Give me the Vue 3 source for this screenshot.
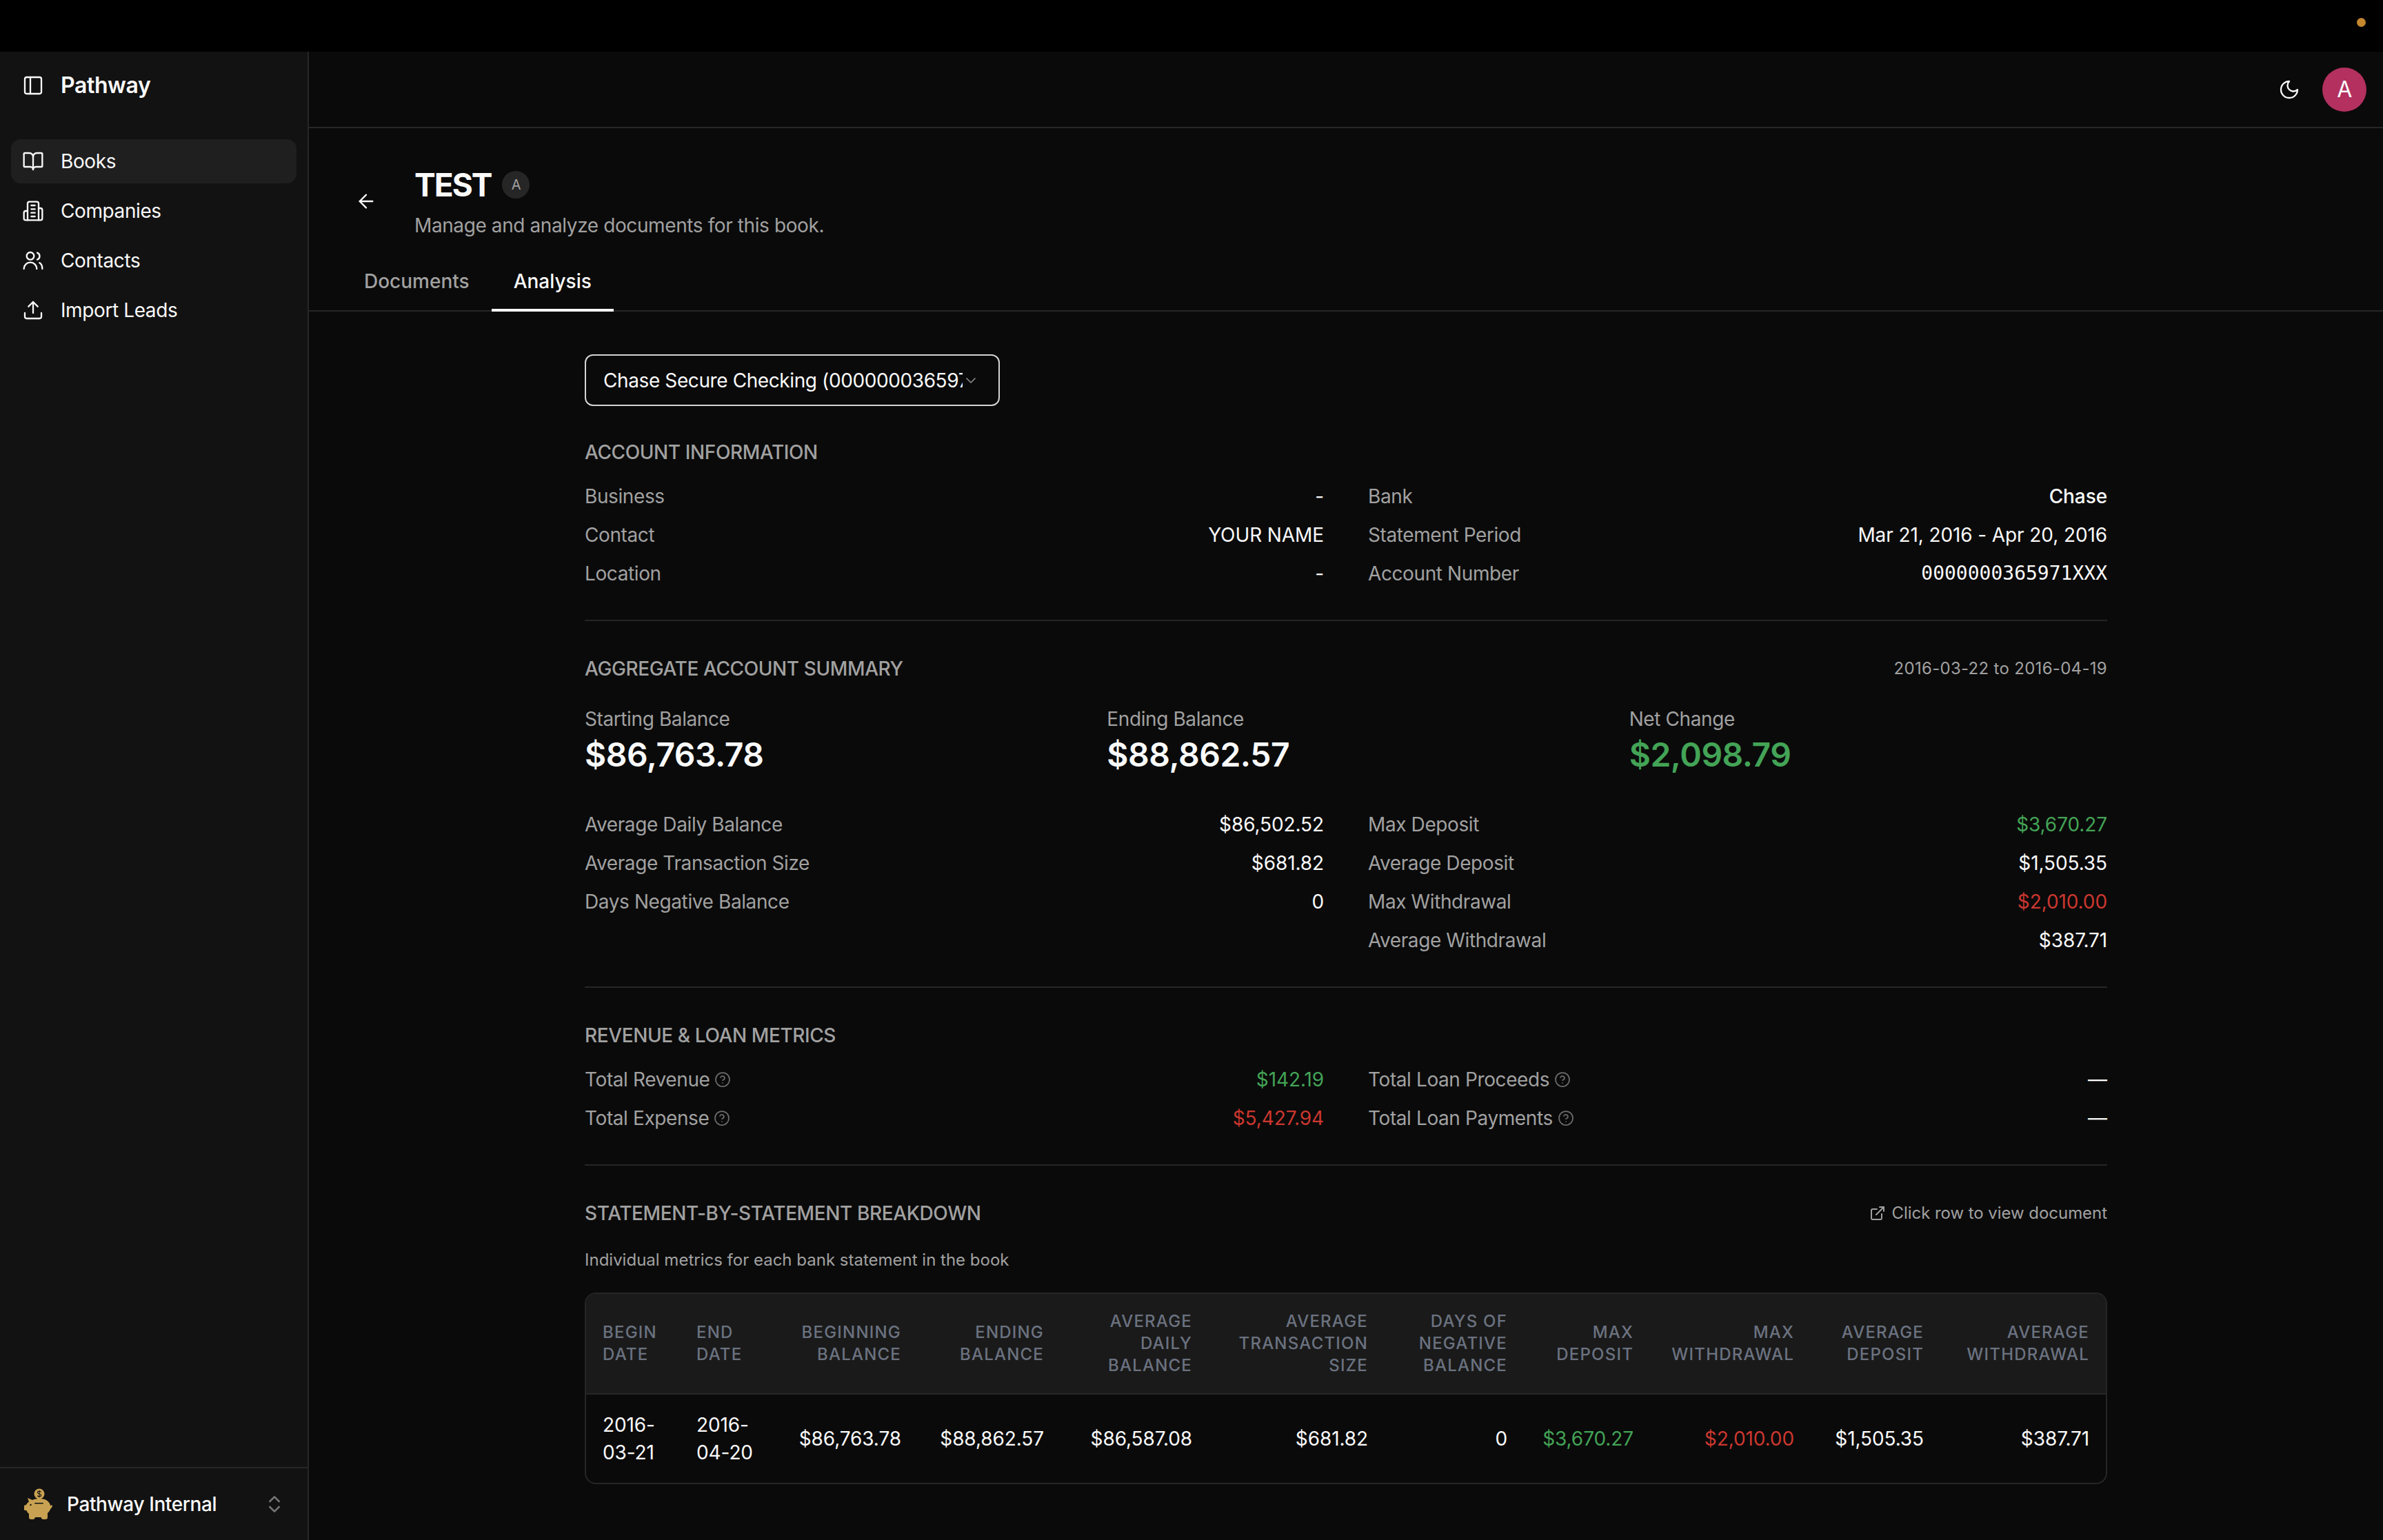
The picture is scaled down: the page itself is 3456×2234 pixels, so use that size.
<script setup>
const nav = [
  { label: 'Books', active: true, icon: 'book' },
  { label: 'Companies', icon: 'building' },
  { label: 'Contacts', icon: 'users' },
  { label: 'Import Leads', icon: 'upload' },
]

const accountLeft = [
  { label: 'Business', value: '-' },
  { label: 'Contact', value: 'YOUR NAME' },
  { label: 'Location', value: '-' },
]
const accountRight = [
  { label: 'Bank', value: 'Chase', strong: true },
  { label: 'Statement Period', value: 'Mar 21, 2016 - Apr 20, 2016' },
  { label: 'Account Number', value: '0000000365971XXX', mono: true },
]

const totals = [
  { label: 'Starting Balance', value: '$86,763.78' },
  { label: 'Ending Balance', value: '$88,862.57' },
  { label: 'Net Change', value: '$2,098.79', tone: 'green' },
]

const summaryLeft = [
  { label: 'Average Daily Balance', value: '$86,502.52' },
  { label: 'Average Transaction Size', value: '$681.82' },
  { label: 'Days Negative Balance', value: '0' },
]
const summaryRight = [
  { label: 'Max Deposit', value: '$3,670.27', tone: 'green' },
  { label: 'Average Deposit', value: '$1,505.35' },
  { label: 'Max Withdrawal', value: '$2,010.00', tone: 'red' },
  { label: 'Average Withdrawal', value: '$387.71' },
]

const revenueLeft = [
  { label: 'Total Revenue', value: '$142.19', tone: 'green', help: true },
  { label: 'Total Expense', value: '$5,427.94', tone: 'red', help: true },
]
const revenueRight = [
  { label: 'Total Loan Proceeds', value: '—', help: true },
  { label: 'Total Loan Payments', value: '—', help: true },
]

const columns = [
  { head: ['BEGIN', 'DATE'], width: 136, left: true },
  { head: ['END', 'DATE'], width: 132, left: true },
  { head: ['BEGINNING', 'BALANCE'], width: 213 },
  { head: ['ENDING', 'BALANCE'], width: 207 },
  { head: ['AVERAGE', 'DAILY', 'BALANCE'], width: 215 },
  { head: ['AVERAGE', 'TRANSACTION', 'SIZE'], width: 255 },
  { head: ['DAYS OF', 'NEGATIVE', 'BALANCE'], width: 202 },
  { head: ['MAX', 'DEPOSIT'], width: 183 },
  { head: ['MAX', 'WITHDRAWAL'], width: 233 },
  { head: ['AVERAGE', 'DEPOSIT'], width: 188 },
  { head: ['AVERAGE', 'WITHDRAWAL'], width: 240 },
]

const statement = [
  { lines: ['2016-', '03-21'], left: true },
  { lines: ['2016-', '04-20'], left: true },
  { lines: ['$86,763.78'] },
  { lines: ['$88,862.57'] },
  { lines: ['$86,587.08'] },
  { lines: ['$681.82'] },
  { lines: ['0'] },
  { lines: ['$3,670.27'], tone: 'green' },
  { lines: ['$2,010.00'], tone: 'red' },
  { lines: ['$1,505.35'] },
  { lines: ['$387.71'] },
]
</script>

<template>
  <div class="page">
    <div class="topbar"><span class="dot"></span></div>

    <div class="shell">
      <aside class="sidebar">
        <div class="brand">
          <svg class="icon" viewBox="0 0 24 24"><rect x="3" y="3" width="18" height="18" rx="2" /><path d="M9 3v18" /></svg>
          <span>Pathway</span>
        </div>

        <nav class="nav">
          <a v-for="item in nav" :key="item.label" class="nav_item" :class="{ active: item.active }">
            <svg class="icon" viewBox="0 0 24 24">
              <template v-if="item.icon === 'book'">
                <path d="M12 7v14" />
                <path d="M3 18a1 1 0 0 1-1-1V4a1 1 0 0 1 1-1h5a4 4 0 0 1 4 4 4 4 0 0 1 4-4h5a1 1 0 0 1 1 1v13a1 1 0 0 1-1 1h-6a3 3 0 0 0-3 3 3 3 0 0 0-3-3z" />
              </template>
              <template v-else-if="item.icon === 'building'">
                <path d="M6 22V4a2 2 0 0 1 2-2h8a2 2 0 0 1 2 2v18Z" />
                <path d="M6 12H4a2 2 0 0 0-2 2v6a2 2 0 0 0 2 2h2" />
                <path d="M18 9h2a2 2 0 0 1 2 2v9a2 2 0 0 1-2 2h-2" />
                <path d="M10 6h4M10 10h4M10 14h4M10 18h4" />
              </template>
              <template v-else-if="item.icon === 'users'">
                <circle cx="9" cy="7" r="4" />
                <path d="M2 21a7 7 0 0 1 14 0" />
                <path d="M16.5 3.5a4 4 0 0 1 0 7.5" />
                <path d="M19 14.5c1.8 1 3 3.5 3 6.5" />
              </template>
              <template v-else>
                <path d="M21 15v4a2 2 0 0 1-2 2H5a2 2 0 0 1-2-2v-4" />
                <path d="M17 8l-5-5-5 5" />
                <path d="M12 3v12" />
              </template>
            </svg>
            <span>{{ item.label }}</span>
          </a>
        </nav>

        <div class="org">
          <svg class="piggy" viewBox="0 0 42 46">
            <circle cx="22" cy="8" r="7.5" fill="#c8a252" />
            <path d="M24.6 5.4c-.6-.9-1.5-1.2-2.6-1.2-1.5 0-2.6.7-2.6 1.9 0 2.7 5.3 1.2 5.3 3.9 0 1.2-1.2 1.9-2.7 1.9-1.2 0-2.2-.4-2.8-1.3M22 2.8v10.4" fill="none" stroke="#121212" stroke-width="1.1" />
            <path fill="#c8a252" d="M5 14L12 17C15 15.5 19 15 23 15C31 15 37 19 38 25L41 24.5C41 27 39.5 29 38.5 29.5C37.5 32 36 34 34 36L34 42C34 44 33 45 31 45L27.5 45C26 45 25 44 24.5 42L16 42C15.5 44 14.5 45 13 45L10 45C8 45 7 44 7 42L7 37C5 35.5 4 34 3.5 32L1 32C0 32 0 31 0 30L0 26C0 25 .5 24.5 1.5 24.5L3 24C4 22 5.5 20.5 7 19.5Z" />
            <circle cx="9.5" cy="24" r="1.2" fill="#121212" />
            <rect x="15" y="21" width="13" height="1.6" rx=".8" fill="#121212" />
          </svg>
          <span class="org_name">Pathway Internal</span>
          <svg class="icon chevrons" viewBox="0 0 24 24"><path d="M7 15l5 5 5-5" /><path d="M7 9l5-5 5 5" /></svg>
        </div>
      </aside>

      <main class="main">
        <header class="header">
          <svg class="icon" viewBox="0 0 24 24"><path d="M12 3a6 6 0 0 0 9 9 9 9 0 1 1-9-9Z" /></svg>
          <div class="avatar">A</div>
        </header>

        <div class="book_head">
          <svg class="icon back" viewBox="0 0 24 24"><path d="M12 19l-7-7 7-7" /><path d="M19 12H5" /></svg>
          <div>
            <div class="title_row">
              <h1>TEST</h1>
              <span class="badge">A</span>
            </div>
            <p class="subtitle">Manage and analyze documents for this book.</p>
          </div>
        </div>

        <div class="tabs">
          <div class="tab">Documents</div>
          <div class="tab tab_on">Analysis</div>
        </div>

        <div class="content">
          <div class="select">
            <span class="select_text">Chase Secure Checking (0000000365971XXX)</span>
            <svg class="icon select_chevron" viewBox="0 0 24 24"><path d="M6 9l6 6 6-6" /></svg>
          </div>

          <section class="section">
            <h2 class="section_title">ACCOUNT INFORMATION</h2>
            <div class="columns">
              <div class="rows">
                <div v-for="row in accountLeft" :key="row.label" class="row">
                  <span class="label">{{ row.label }}</span>
                  <span class="value">{{ row.value }}</span>
                </div>
              </div>
              <div class="rows">
                <div v-for="row in accountRight" :key="row.label" class="row">
                  <span class="label">{{ row.label }}</span>
                  <span class="value" :class="{ mono: row.mono, strong: row.strong }">{{ row.value }}</span>
                </div>
              </div>
            </div>
          </section>

          <section class="section">
            <div class="section_head">
              <h2 class="section_title">AGGREGATE ACCOUNT SUMMARY</h2>
              <span class="note date_range">2016-03-22 to 2016-04-19</span>
            </div>
            <div class="totals">
              <div v-for="total in totals" :key="total.label">
                <div class="label">{{ total.label }}</div>
                <div class="total_value" :class="total.tone">{{ total.value }}</div>
              </div>
            </div>
            <div class="columns">
              <div class="rows">
                <div v-for="row in summaryLeft" :key="row.label" class="row">
                  <span class="label">{{ row.label }}</span>
                  <span class="value">{{ row.value }}</span>
                </div>
              </div>
              <div class="rows">
                <div v-for="row in summaryRight" :key="row.label" class="row">
                  <span class="label">{{ row.label }}</span>
                  <span class="value" :class="row.tone">{{ row.value }}</span>
                </div>
              </div>
            </div>
          </section>

          <section class="section">
            <h2 class="section_title">REVENUE &amp; LOAN METRICS</h2>
            <div class="columns">
              <div v-for="(group, i) in [revenueLeft, revenueRight]" :key="i" class="rows">
                <div v-for="row in group" :key="row.label" class="row">
                  <span class="label with_help">
                    {{ row.label }}
                    <svg class="icon help" viewBox="0 0 24 24"><circle cx="12" cy="12" r="10" /><path d="M9.09 9a3 3 0 0 1 5.83 1c0 2-3 3-3 3" /><path d="M12 17h.01" /></svg>
                  </span>
                  <span class="value" :class="row.tone">{{ row.value }}</span>
                </div>
              </div>
            </div>
          </section>

          <section class="section last">
            <div class="section_head">
              <h2 class="section_title">STATEMENT-BY-STATEMENT BREAKDOWN</h2>
              <span class="note with_icon">
                <svg class="icon link" viewBox="0 0 24 24"><path d="M15 3h6v6" /><path d="M10 14L21 3" /><path d="M18 13v6a2 2 0 0 1-2 2H5a2 2 0 0 1-2-2V8a2 2 0 0 1 2-2h6" /></svg>
                Click row to view document
              </span>
            </div>
            <p class="table_intro">Individual metrics for each bank statement in the book</p>

            <div class="table_wrap">
              <table>
                <colgroup>
                  <col v-for="(col, i) in columns" :key="i" :style="{ width: col.width + 'px' }" />
                </colgroup>
                <thead>
                  <tr>
                    <th v-for="(col, i) in columns" :key="i" :class="{ left: col.left }">
                      <div v-for="line in col.head" :key="line">{{ line }}</div>
                    </th>
                  </tr>
                </thead>
                <tbody>
                  <tr>
                    <td v-for="(cell, i) in statement" :key="i" :class="[cell.tone, { left: cell.left }]">
                      <div v-for="line in cell.lines" :key="line">{{ line }}</div>
                    </td>
                  </tr>
                </tbody>
              </table>
            </div>
          </section>
        </div>
      </main>
    </div>
  </div>
</template>

<style>
html, body {
  margin: 0;
  background: #0a0a0a;
}
</style>

<style scoped>
.page {
  display: flex;
  flex-direction: column;
  height: 2234px;
  font-family: Inter, "Liberation Sans", sans-serif;
  font-size: 28px;
  line-height: 40px;
  letter-spacing: -0.4px;
  color: #fafafa;
  background: #0a0a0a;
  overflow: hidden;
}

.topbar {
  flex: none;
  height: 75px;
  background: #000;
  display: flex;
  justify-content: flex-end;
  align-items: flex-start;
}

.dot {
  width: 13px;
  height: 13px;
  margin: 26px 25px 0 0;
  border-radius: 50%;
  background: #c4872f;
}

.shell {
  flex: 1;
  display: flex;
  min-height: 0;
}

.icon {
  flex: none;
  width: 32px;
  height: 32px;
  fill: none;
  stroke: currentColor;
  stroke-width: 1.75;
  stroke-linecap: round;
  stroke-linejoin: round;
}

.sidebar {
  flex: none;
  width: 448px;
  box-sizing: border-box;
  display: flex;
  flex-direction: column;
  background: #121212;
  border-right: 2px solid #262626;
}

.brand {
  display: flex;
  align-items: center;
  gap: 24px;
  height: 97px;
  padding: 0 32px;
  font-size: 32px;
  font-weight: 600;
}

.nav {
  display: flex;
  flex-direction: column;
  gap: 8px;
  padding: 30px 16px 0;
  flex: 1;
}

.nav_item {
  display: flex;
  align-items: center;
  gap: 24px;
  height: 64px;
  padding: 0 16px;
  border-radius: 14px;
  font-weight: 400;
}

.active {
  background: #1f1f1f;
}

.org {
  display: flex;
  align-items: center;
  height: 104px;
  padding: 0 40px 0 35px;
  border-top: 2px solid #262626;
}

.piggy {
  flex: none;
  width: 42px;
  height: 46px;
}

.org_name {
  flex: 1;
  margin-left: 20px;
  font-weight: 500;
}

.chevrons {
  color: #737373;
  margin-right: -8px;
  stroke-width: 2;
}

.main {
  flex: 1;
  min-width: 0;
}

.header {
  height: 109px;
  display: flex;
  justify-content: flex-end;
  align-items: center;
  gap: 32px;
  padding-right: 24px;
  border-bottom: 2px solid #262626;
}

.avatar {
  width: 64px;
  height: 64px;
  border-radius: 50%;
  background: #b3305f;
  display: flex;
  align-items: center;
  justify-content: center;
  font-size: 32px;
}

.book_head {
  display: flex;
  align-items: center;
  gap: 54px;
  padding: 54px 0 0 67px;
}

.back {
  margin-top: -4px;
}

.title_row {
  display: flex;
  align-items: center;
  gap: 16px;
}

h1 {
  margin: 0;
  font-size: 46px;
  line-height: 56px;
  font-weight: 700;
  letter-spacing: -2px;
}

.badge {
  width: 40px;
  height: 40px;
  border-radius: 50%;
  background: #262626;
  color: #a1a1a1;
  font-size: 20px;
  display: flex;
  align-items: center;
  justify-content: center;
}

.subtitle {
  margin: 11px 0 0;
  color: #a1a1a1;
}

.tabs {
  display: flex;
  margin-top: 18px;
  padding-left: 48px;
  border-bottom: 2px solid #262626;
}

.tab {
  padding: 23px 32px 20px;
  font-weight: 500;
  letter-spacing: 0;
  color: #a1a1a1;
  margin-bottom: -2px;
  border-bottom: 4px solid transparent;
}

.tab_on {
  color: #fafafa;
  border-bottom-color: #fafafa;
}

.content {
  width: 2208px;
  margin: 0 auto;
  padding-top: 62px;
}

.select {
  box-sizing: border-box;
  width: 602px;
  height: 75px;
  display: flex;
  align-items: center;
  padding: 0 28px 0 25px;
  margin-bottom: 47px;
  border: 2px solid #d4d4d4;
  border-radius: 12px;
}

.select_text {
  flex: 1;
  min-width: 0;
  overflow: hidden;
  white-space: nowrap;
}

.select_chevron {
  width: 24px;
  height: 24px;
  color: #8a8a8a;
}

.section {
  padding-bottom: 47px;
  margin-bottom: 49px;
  border-bottom: 2px solid #262626;
}

.last {
  border-bottom: 0;
  margin-bottom: 0;
  padding-bottom: 0;
}

.section_head {
  display: flex;
  justify-content: space-between;
  align-items: center;
}

.section_title {
  margin: 0;
  font-size: 28px;
  line-height: 40px;
  font-weight: 500;
  color: #a1a1a1;
}

.note {
  font-size: 24px;
  letter-spacing: -0.05px;
  color: #a1a1a1;
}

.date_range {
  letter-spacing: 0.3px;
}

.with_icon {
  display: flex;
  align-items: center;
  gap: 8px;
}

.link {
  width: 24px;
  height: 24px;
  stroke-width: 2;
}

.columns {
  display: grid;
  grid-template-columns: 1fr 1fr;
  column-gap: 64px;
  margin-top: 24px;
}

.rows {
  display: flex;
  flex-direction: column;
  gap: 16px;
}

.row {
  display: flex;
  justify-content: space-between;
  align-items: center;
}

.label {
  color: #a1a1a1;
}

.value {
  letter-spacing: -0.1px;
}

.value.strong {
  font-weight: 500;
}

.mono {
  font-family: "DejaVu Sans Mono", monospace;
  font-size: 28px;
  letter-spacing: 0;
}

.with_help {
  display: flex;
  align-items: center;
  gap: 7px;
}

.help {
  width: 24px;
  height: 24px;
  color: #6b6b6b;
  stroke-width: 1.75;
}

.green {
  color: #43a356;
}

.red {
  color: #cb372f;
}

.totals {
  display: grid;
  grid-template-columns: repeat(3, 1fr);
  column-gap: 64px;
  margin-top: 33px;
  margin-bottom: 49px;
}

.total_value {
  font-size: 48px;
  line-height: 64px;
  font-weight: 600;
  letter-spacing: -0.5px;
}

.totals + .columns {
  margin-top: 0;
}

.table_intro {
  margin: 32px 0 31px;
  font-size: 24px;
  line-height: 32px;
  letter-spacing: 0;
  color: #a1a1a1;
}

.table_wrap {
  border: 2px solid #262626;
  border-radius: 16px;
  overflow: hidden;
}

table {
  width: 100%;
  table-layout: fixed;
  border-collapse: collapse;
}

th {
  padding: 24px;
  font-size: 24px;
  line-height: 32px;
  font-weight: 500;
  letter-spacing: 1.2px;
  text-align: right;
  color: #6b7280;
  background: #1a1a1a;
  border-bottom: 2px solid #262626;
  vertical-align: middle;
}

td {
  padding: 24px;
  text-align: right;
  vertical-align: middle;
  letter-spacing: -0.1px;
}

.left {
  text-align: left;
}
</style>
